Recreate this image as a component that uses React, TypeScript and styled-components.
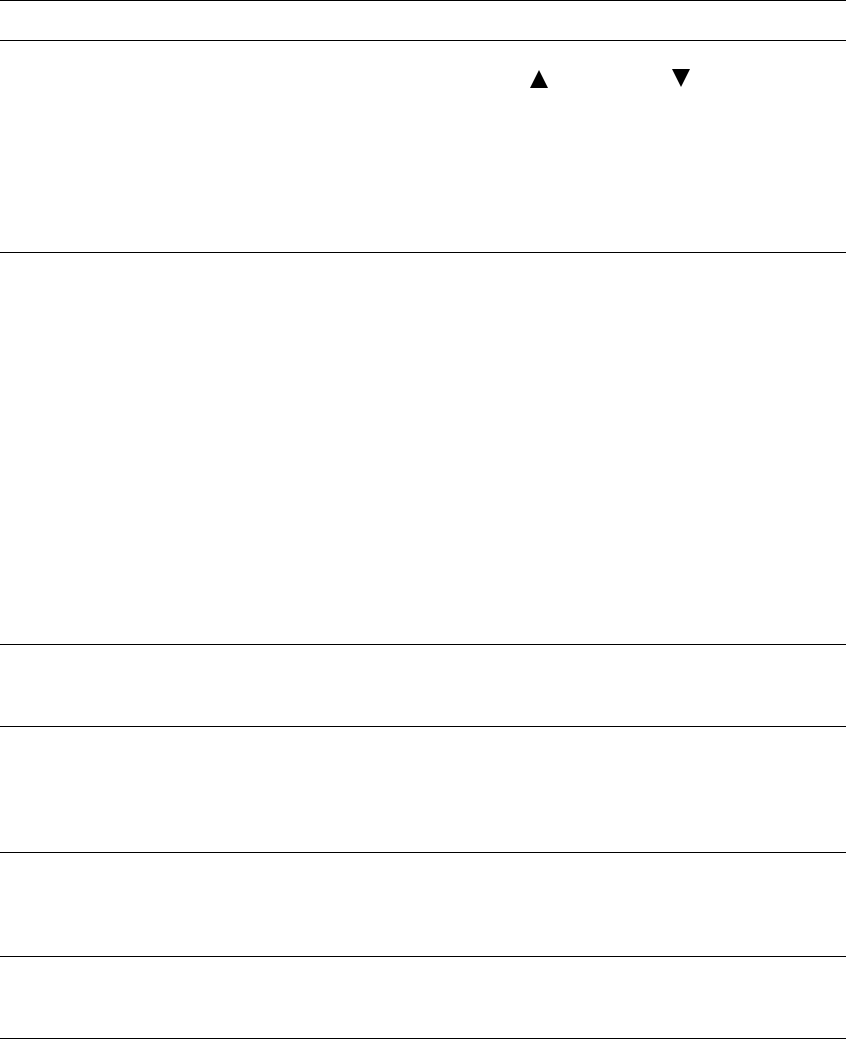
import { FC } from 'react';
import styled, { createGlobalStyle } from 'styled-components';

const GlobalStyle = createGlobalStyle`
    html, body {
        margin: 0;
        padding: 0;
        background: #ffffff;
        font-family: "Liberation Sans", Arial, sans-serif;
    }
`;

const Table = styled.div`
    display: flex;
    flex-direction: column;
    width: 846px;
    border-top: 1px solid #000000;
`;

const Row = styled.div<{ $height: number }>`
    display: flex;
    align-items: flex-start;
    height: ${(p) => p.$height}px;
    border-bottom: 1px solid #000000;
`;

const SortControls = styled.div`
    display: flex;
    align-items: flex-start;
    gap: 124px;
    margin-left: 530px;
    margin-top: 28px;
`;

const Arrow = styled.svg<{ $offset: number }>`
    display: block;
    width: 18px;
    height: 18px;
    margin-top: ${(p) => p.$offset}px;
`;

const UpArrow: FC = () => (
    <Arrow $offset={1} viewBox="0 0 18 18">
        <polygon points="9,0 18,18 0,18" fill="#000" />
    </Arrow>
);

const DownArrow: FC = () => (
    <Arrow $offset={0} viewBox="0 0 18 18">
        <polygon points="0,0 18,0 9,18" fill="#000" />
    </Arrow>
);

const App: FC = () => {
    return (
        <>
            <GlobalStyle />
            <Table>
                <Row $height={39} />
                <Row $height={211}>
                    <SortControls>
                        <UpArrow />
                        <DownArrow />
                    </SortControls>
                </Row>
                <Row $height={391} />
                <Row $height={81} />
                <Row $height={125} />
                <Row $height={103} />
                <Row $height={81} />
            </Table>
        </>
    );
};

export default App;
